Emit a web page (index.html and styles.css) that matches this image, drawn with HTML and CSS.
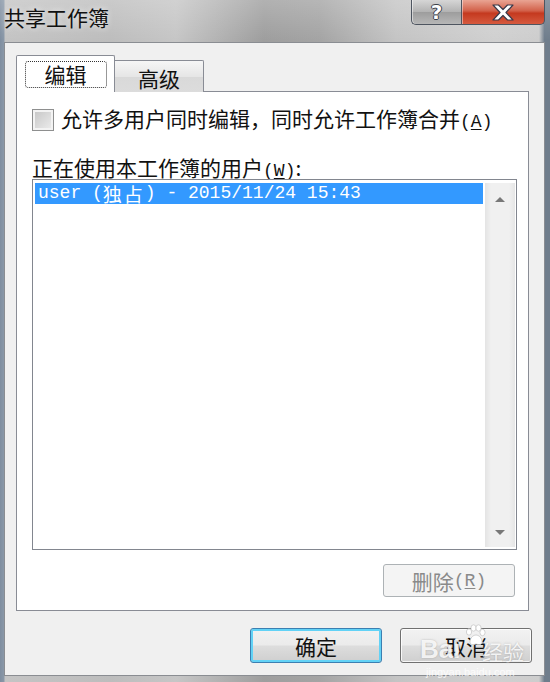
FILE: index.html
```html
<!DOCTYPE html>
<html lang="zh-CN">
<head>
    <meta charset="UTF-8">
    <title>共享工作簿</title>
    <link rel="stylesheet" href="styles.css">
</head>
<body>
    <div class="window">
        <div class="titlebar">
            <span class="title">共享工作簿</span>
            <div class="caption-buttons">
                <div class="cap help"><span class="qmark">?</span></div>
                <div class="cap close">
                    <svg width="24" height="17" viewBox="0 0 24 17">
                        <path d="M2 1h5.5l4.5 4.5L16.5 1H22l-7 7.5 7 7.5h-5.5L12 11.5 7.5 16H2l7-7.5z" fill="#fff" stroke="#3a3a4a" stroke-width="1.2" stroke-linejoin="round"/>
                    </svg>
                </div>
            </div>
        </div>

        <div class="client">
            <div class="tabs">
                <div class="tab active"><span class="focus">编辑</span></div>
                <div class="tab">高级</div>
            </div>

            <div class="page">
                <div class="check-row">
                    <span class="checkbox"></span>
                    <span>允许多用户同时编辑，同时允许工作簿合并<span class="key">(<u>A</u>)</span></span>
                </div>
                <div class="field-label">正在使用本工作簿的用户<span class="key">(<u>W</u>)</span>:</div>
                <div class="listbox">
                    <div class="items">
                        <div class="item selected"><span>user (</span><span class="cjk">独占</span><span>) - 2015/11/24 15:43</span></div>
                    </div>
                    <div class="scrollbar">
                        <span class="arrow up"></span>
                        <span class="arrow down"></span>
                    </div>
                </div>
                <div class="page-actions">
                    <div class="btn disabled">删除<span class="key">(<u>R</u>)</span></div>
                </div>
            </div>

            <div class="dialog-actions">
                <div class="btn default">确定</div>
                <div class="btn">取消</div>
            </div>
        </div>

        <!-- watermark baked into the screenshot -->
        <div class="watermark">
            <span class="wm-bai">Bai</span>
            <span class="wm-paw">
                <svg width="22" height="22" viewBox="0 0 22 22">
                    <g fill="#fff" stroke="#c8c8c8" stroke-width="0.8">
                        <ellipse cx="5" cy="8" rx="2.6" ry="3.2"/>
                        <ellipse cx="9.5" cy="4" rx="2.6" ry="3.2"/>
                        <ellipse cx="14.5" cy="4" rx="2.6" ry="3.2"/>
                        <ellipse cx="18.5" cy="8.5" rx="2.6" ry="3.2"/>
                        <path d="M6 18c0-4 3-7 6-7s6 3 6 7c0 3-3 3-6 2-3 1-6 1-6-2z"/>
                    </g>
                </svg>
            </span>
            <span class="wm-jy">经验</span>
            <span class="wm-url">jingyan.baidu.com</span>
        </div>
    </div>
</body>
</html>
```

FILE: styles.css
```css
body {
    margin: 0;
    width: 550px;
    height: 682px;
    overflow: hidden;
    font-family: "Noto Sans CJK SC", "Liberation Sans", sans-serif;
}
.window {
    position: relative;
    width: 550px;
    height: 682px;
    box-sizing: border-box;
    padding: 0 5px 6px 4px;
    display: flex;
    flex-direction: column;
    background:
        linear-gradient(to bottom, rgba(255,255,255,0.2), rgba(255,255,255,0) 40px),
        linear-gradient(to right, #7f8ea0 0, #8a98a8 4px, #c4c4c4 5px, #bdbdbd 20%, #c6c6c6 32%, #9e9e9e 48%, #a4a4a4 58%, #c4c4c4 72%, #d0d0d0 90%, #cdcdcd 98%, #6f7d8c 99%);
}

/* title bar */
.titlebar {
    height: 42px;
    display: flex;
    justify-content: space-between;
    align-items: flex-start;
}
.title {
    font-size: 21px;
    line-height: 34px;
    color: #111;
    text-shadow: 0 0 6px rgba(255,255,255,0.8);
}
.caption-buttons {
    display: flex;
}
.cap {
    height: 25px;
    box-sizing: border-box;
    border: 1px solid #4e5560;
    border-top: none;
    display: flex;
    align-items: center;
    justify-content: center;
}
.help {
    width: 50px;
    border-right: none;
    border-radius: 0 0 0 5px;
    background: linear-gradient(to bottom, #d6d6d6, #b2b2b2 50%, #9d9d9d 51%, #b7b7b7);
    box-shadow: inset 1px 0 0 rgba(255,255,255,0.5);
}
.qmark {
    font-family: "DejaVu Sans", sans-serif;
    font-weight: bold;
    font-size: 20px;
    line-height: 22px;
    color: #fff;
    text-shadow: -1px 0 #3a3f4a, 1px 0 #3a3f4a, 0 -1px #3a3f4a, 0 1px #3a3f4a;
}
.close {
    width: 84px;
    border-radius: 0 0 5px 0;
    background: linear-gradient(to bottom, #e9a493, #d2614a 45%, #c4391f 55%, #d65a3f);
    box-shadow: inset 1px 0 0 rgba(255,255,255,0.45);
}

/* client area */
.client {
    flex: 1;
    background: #f0f0f0;
    border: 1px solid #8a8d92;
    padding: 12px 12px 12px 11px;
    display: flex;
    flex-direction: column;
    font-size: 21px;
    color: #111;
}
.key {
    font-family: "Liberation Mono", monospace;
    font-size: 18px;
}
.key u {
    text-decoration: underline;
    text-underline-offset: 2px;
}

/* tabs */
.tabs {
    display: flex;
    align-items: flex-end;
    height: 37px;
    margin-bottom: -1px;
    position: relative;
    z-index: 1;
}
.tab {
    box-sizing: border-box;
    width: 89px;
    height: 32px;
    border: 1px solid #898c95;
    border-left: none;
    border-bottom: none;
    border-radius: 0 2px 0 0;
    background: linear-gradient(to bottom, #f6f6f6, #e6e6e6 50%, #d9d9d9 51%, #dcdcdc);
    display: flex;
    align-items: center;
    justify-content: center;
    line-height: 24px;
    padding-top: 3px;
}
.tab.active {
    width: 99px;
    height: 37px;
    border-left: 1px solid #898c95;
    border-radius: 2px 2px 0 0;
    background: #fff;
    padding-top: 0;
}
.focus {
    display: block;
    width: 82px;
    height: 27px;
    box-sizing: border-box;
    border: 1px dotted #333;
    border-radius: 3px;
    text-align: center;
    line-height: 25px;
}

/* tab page */
.page {
    box-sizing: border-box;
    height: 520px;
    margin-right: 3px;
    border: 1px solid #898c95;
    background: #fff;
    padding: 16px 11px 13px 15px;
    display: flex;
    flex-direction: column;
}
.check-row {
    height: 24px;
    display: flex;
    align-items: center;
    line-height: 24px;
}
.checkbox {
    width: 22px;
    height: 22px;
    box-sizing: border-box;
    border: 1px solid #8e8f8f;
    background: linear-gradient(135deg, #c4c4c4, #eeeeee);
    box-shadow: inset 0 0 0 2px #f3f3f3;
    margin-right: 7px;
    flex: none;
}
.field-label {
    margin-top: 24px;
    height: 22px;
    line-height: 22px;
}

/* list box */
.listbox {
    margin-top: 1px;
    height: 371px;
    box-sizing: border-box;
    border: 1px solid #82868f;
    padding: 3px 1px 2px 2px;
    display: flex;
}
.items {
    flex: 1;
}
.item {
    height: 21px;
    display: flex;
    align-items: center;
    padding-left: 3px;
    font-family: "Liberation Mono", monospace;
    font-size: 18px;
    line-height: 21px;
    white-space: pre;
}
.item .cjk {
    font-family: "Noto Sans CJK SC", sans-serif;
    font-size: 19px;
    width: 42px;
    letter-spacing: 2px;
}
.item.selected {
    background: #3399ff;
    color: #fff;
}
.scrollbar {
    width: 30px;
    margin-left: 2px;
    background: linear-gradient(to right, #e4e4e4, #f0f0f0 20%, #f0f0f0 80%, #e6e6e6);
    display: flex;
    flex-direction: column;
    align-items: center;
    justify-content: space-between;
    padding: 14px 0 12px;
    box-sizing: border-box;
}
.arrow {
    width: 0;
    height: 0;
    border-left: 5px solid transparent;
    border-right: 5px solid transparent;
}
.arrow.up {
    border-bottom: 5px solid #787878;
}
.arrow.down {
    border-top: 5px solid #787878;
}

/* buttons */
.page-actions {
    margin-top: 14px;
    display: flex;
    justify-content: flex-end;
    padding-right: 2px;
}
.btn {
    width: 132px;
    height: 35px;
    box-sizing: border-box;
    border: 1px solid #707070;
    border-radius: 3px;
    background: linear-gradient(to bottom, #f2f2f2, #ebebeb 48%, #dddddd 52%, #cfcfcf);
    box-shadow: inset 0 0 0 1px rgba(255,255,255,0.8);
    display: flex;
    align-items: center;
    justify-content: center;
    font-size: 21px;
    line-height: 24px;
}
.btn.disabled {
    height: 33px;
    border-color: #adb2b5;
    background: #f4f4f4;
    box-shadow: none;
    color: #8a8a8a;
}
.btn.default {
    border-color: #3c7fb1;
    box-shadow: inset 0 0 0 2px #62d2f6;
}
.dialog-actions {
    margin-top: 17px;
    display: flex;
    justify-content: flex-end;
    gap: 18px;
}

/* watermark */
.watermark {
    position: absolute;
    left: 420px;
    top: 622px;
    width: 110px;
    height: 56px;
    pointer-events: none;
}
.wm-bai {
    position: absolute;
    left: 0;
    top: 12px;
    font-family: "Liberation Sans", sans-serif;
    font-weight: bold;
    font-size: 26px;
    color: rgba(255,255,255,0.85);
    text-shadow: 0 0 2px rgba(120,120,120,0.5);
}
.wm-paw {
    position: absolute;
    left: 44px;
    top: 2px;
}
.wm-jy {
    position: absolute;
    left: 62px;
    top: 14px;
    font-size: 21px;
    color: rgba(255,255,255,0.85);
    text-shadow: 0 0 2px rgba(120,120,120,0.5);
}
.wm-url {
    position: absolute;
    left: 6px;
    top: 44px;
    font-family: "Liberation Sans", sans-serif;
    font-size: 11px;
    color: rgba(255,255,255,0.8);
}
```
